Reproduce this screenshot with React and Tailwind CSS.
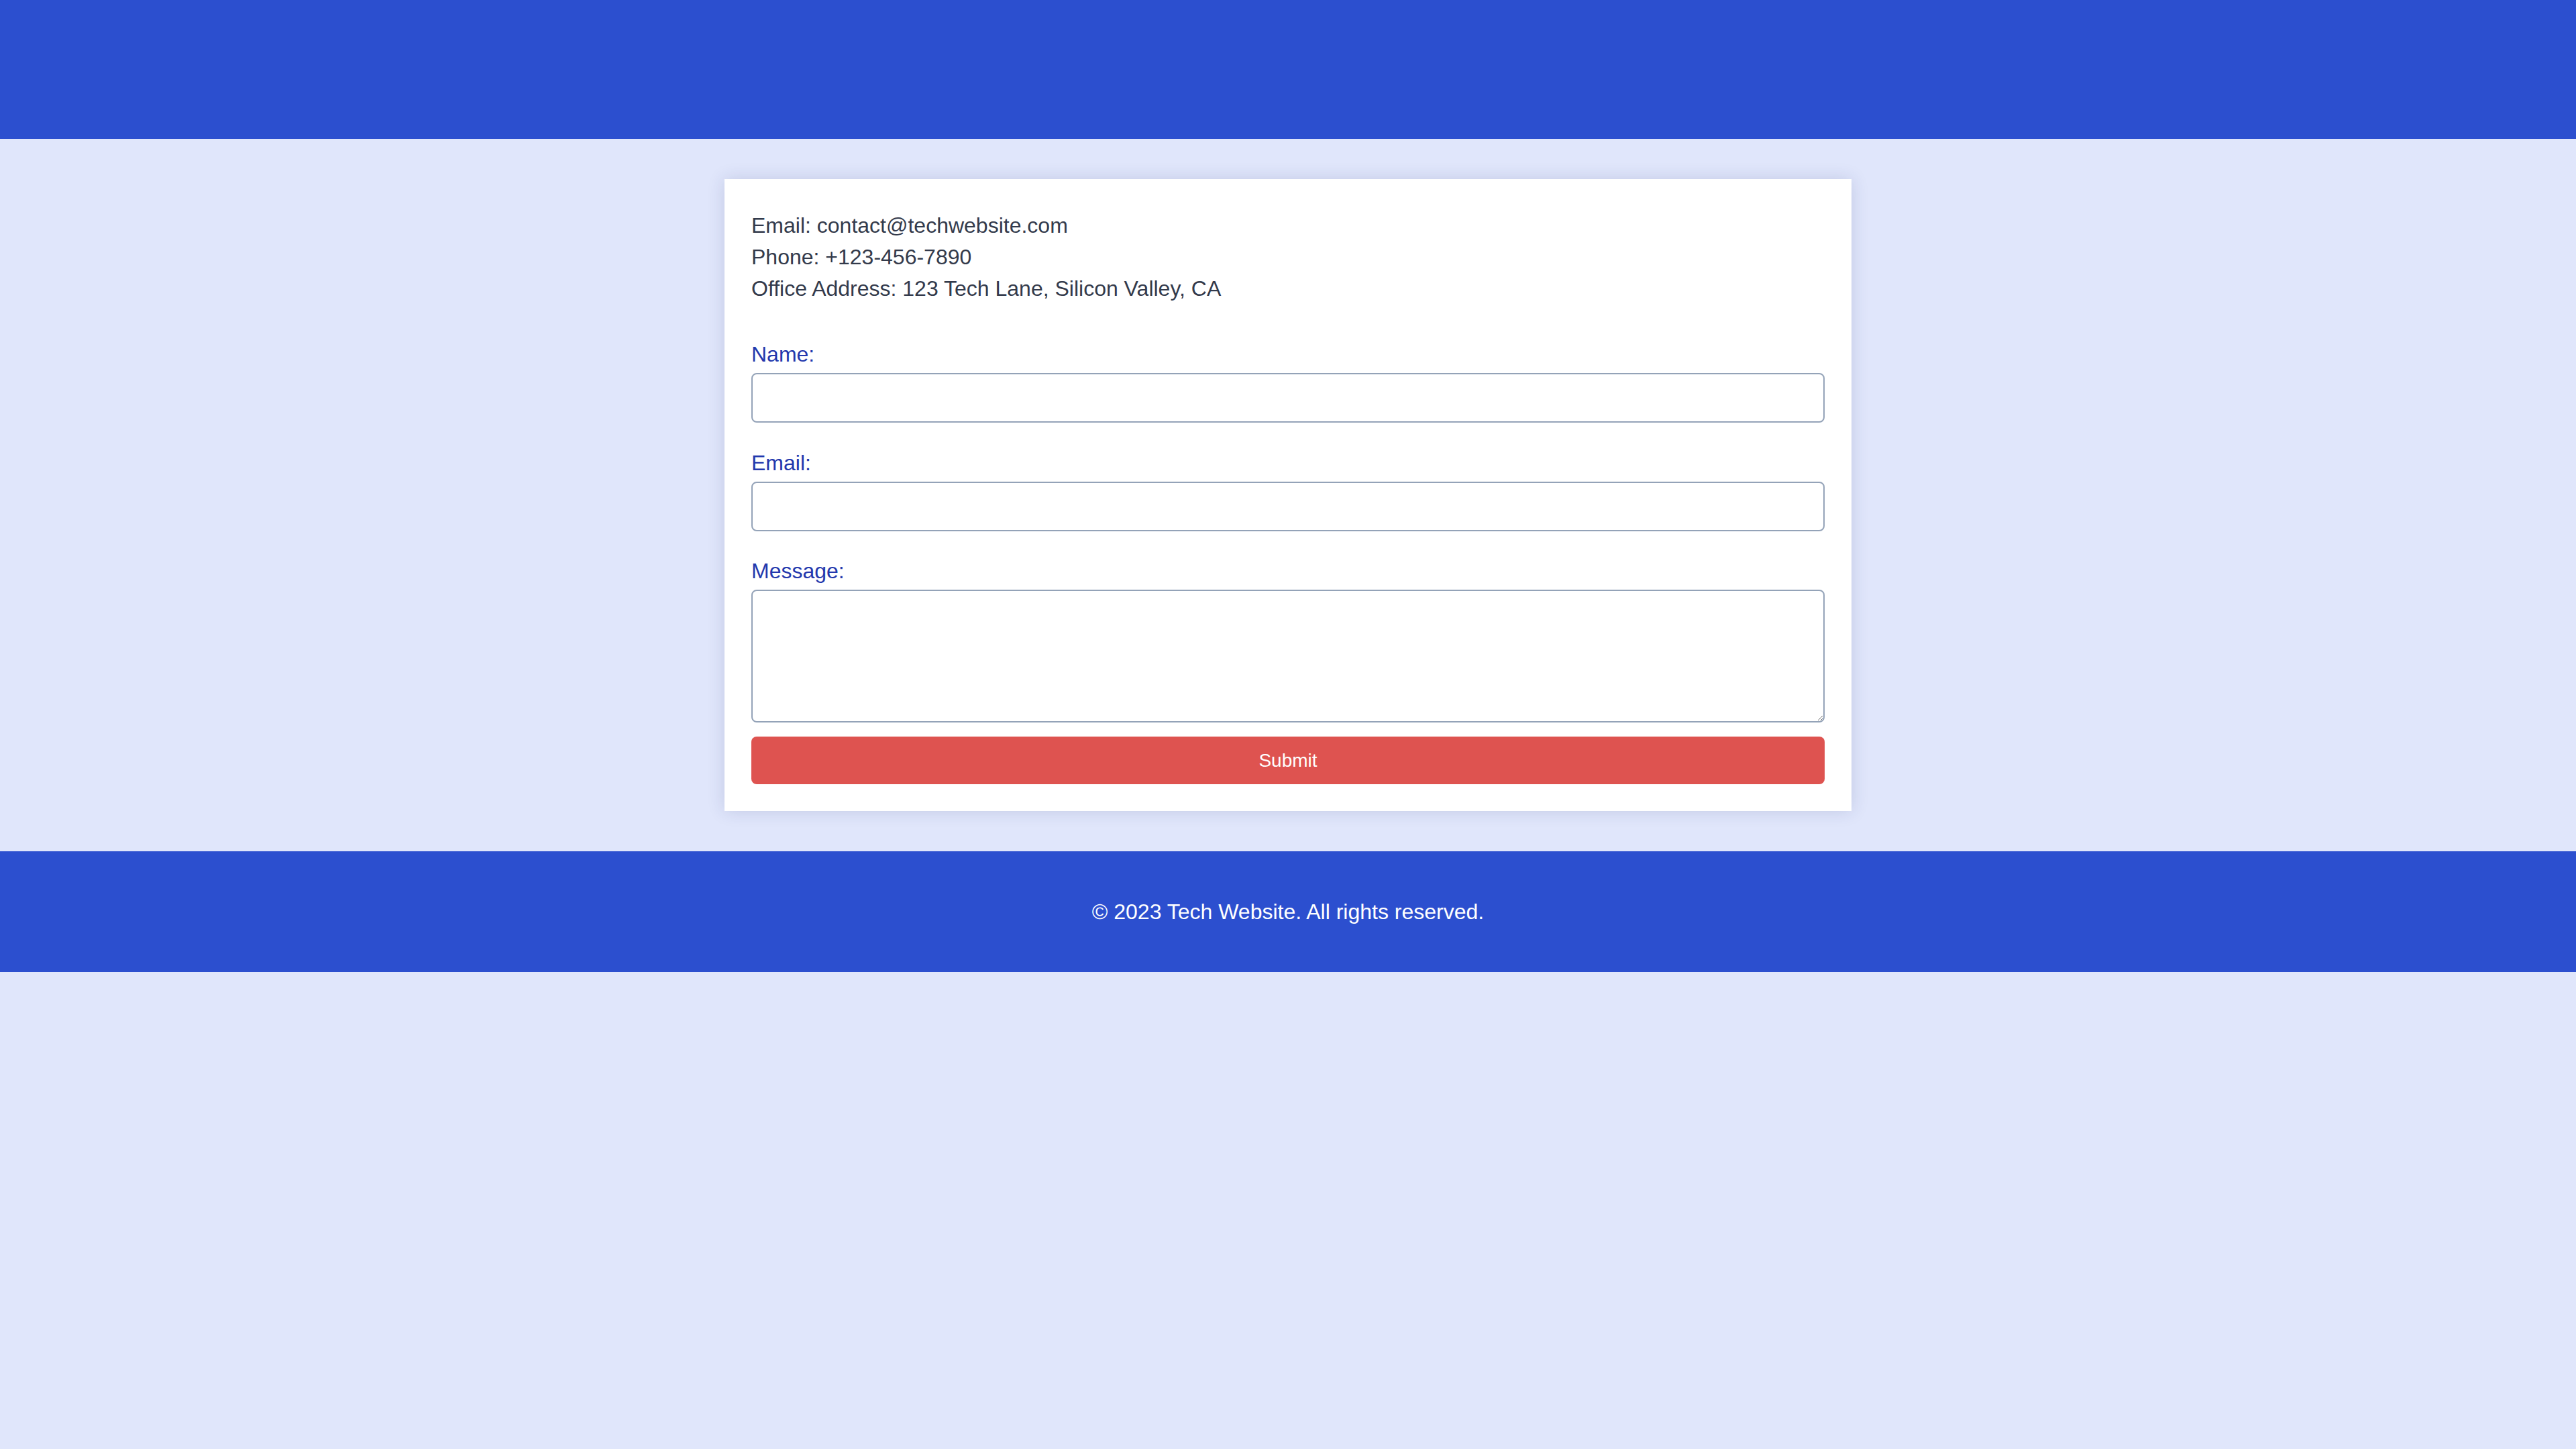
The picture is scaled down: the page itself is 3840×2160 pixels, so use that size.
import React, { useState } from "react";

const Field = ({ id, label, children, className }) => (
  <div className={className}>
    <label htmlFor={id} className="block mb-[4px] text-[#2338ad] leading-[47px]">
      {label}
    </label>
    {children}
  </div>
);

const App = () => {
  const [form, setForm] = useState({ name: "", email: "", message: "" });

  const handleChange = (field, value) => {
    setForm((prev) => ({ ...prev, [field]: value }));
  };

  return (
    <div className="min-h-screen bg-[#e0e6fb] font-['Liberation_Sans',Arial,sans-serif] text-[32px]">
      <header className="h-[207px] bg-[#2c4fcf]" />

      <main className="py-[60px]">
        <div className="w-[1680px] mx-auto bg-white p-[40px] shadow-[0_0_24px_rgba(40,50,110,0.16)]">
          <div className="pt-[6px] text-[#333a4b] leading-[47px]">
            <p>Email: contact@techwebsite.com</p>
            <p>Phone: +123-456-7890</p>
            <p>Office Address: 123 Tech Lane, Silicon Valley, CA</p>
          </div>

          <form className="mt-[51px]" onSubmit={(e) => e.preventDefault()}>
            <Field id="name" label="Name:" className="mb-[37px]">
              <input
                id="name"
                type="text"
                value={form.name}
                onChange={(e) => handleChange("name", e.target.value)}
                className="block w-full h-[74px] border-2 border-[#94a3b8] rounded-[8px] bg-white px-[18px] outline-none"
              />
            </Field>
            <Field id="email" label="Email:" className="mb-[36px]">
              <input
                id="email"
                type="email"
                value={form.email}
                onChange={(e) => handleChange("email", e.target.value)}
                className="block w-full h-[74px] border-2 border-[#94a3b8] rounded-[8px] bg-white px-[18px] outline-none"
              />
            </Field>
            <Field id="message" label="Message:">
              <textarea
                id="message"
                value={form.message}
                onChange={(e) => handleChange("message", e.target.value)}
                className="block w-full h-[198px] mt-[1px] border-2 border-[#94a3b8] rounded-[8px] bg-white px-[18px] py-[12px] outline-none resize-y"
              />
            </Field>
            <button
              type="submit"
              className="block w-full h-[71px] mt-[21px] rounded-[8px] bg-[#de5350] text-white text-[28px]"
            >
              Submit
            </button>
          </form>
        </div>
      </main>

      <footer className="h-[180px] bg-[#2c4fcf] flex items-center justify-center text-white">
        <p>© 2023 Tech Website. All rights reserved.</p>
      </footer>
    </div>
  );
};

export default App;
